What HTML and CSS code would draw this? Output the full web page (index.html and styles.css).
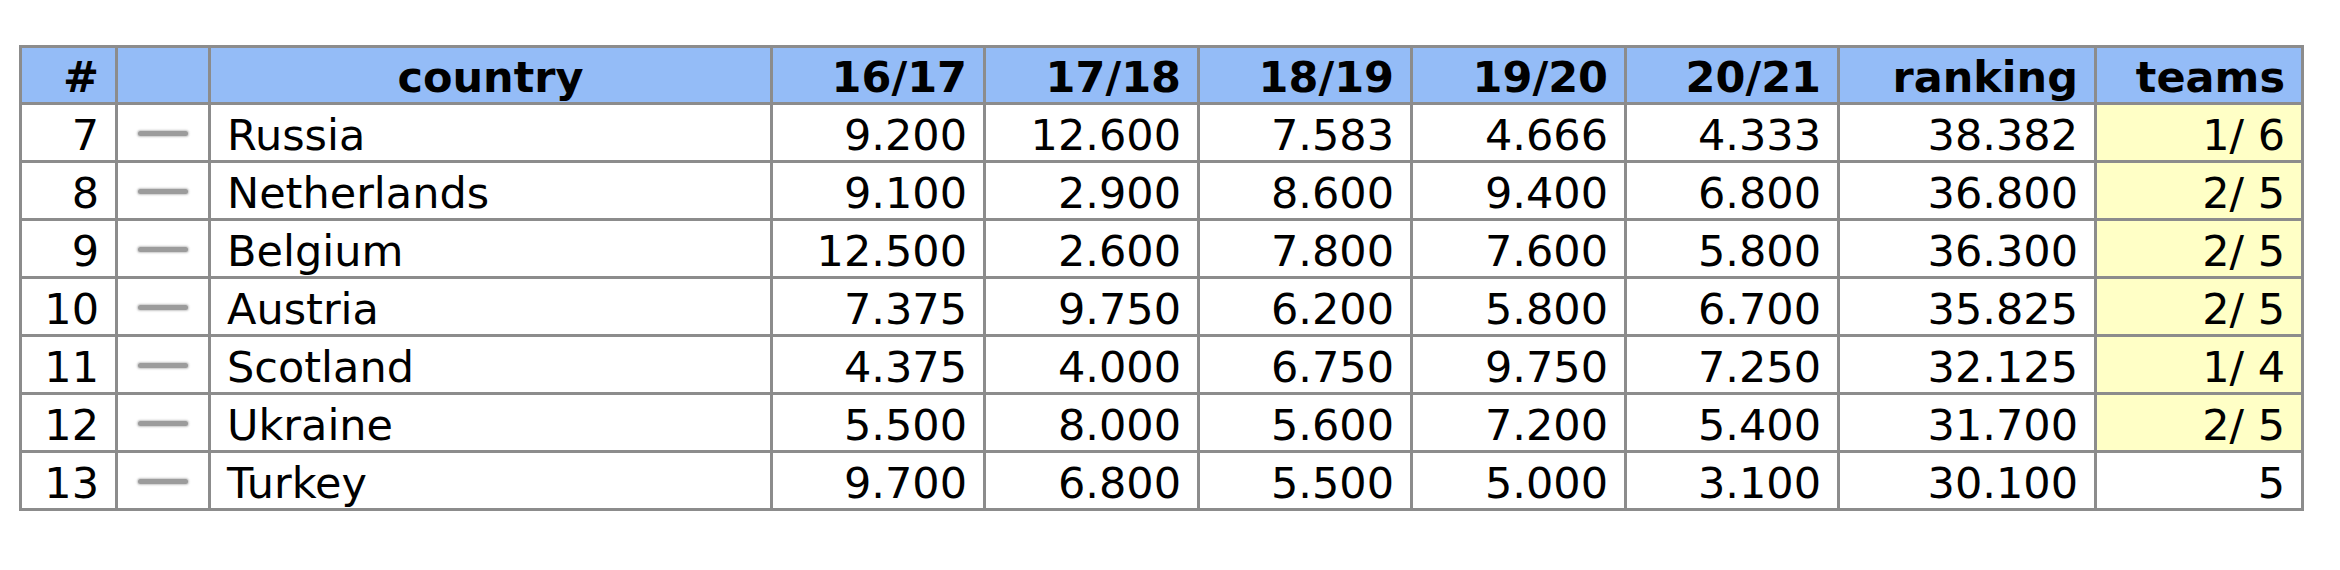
FILE: index.html
```html
<!DOCTYPE html>
<html>
<head>
<meta charset="utf-8">
<link rel="stylesheet" href="styles.css">
</head>
<body>
<div class="wrap">
<table class="rank">
<colgroup>
<col class="c-num"><col class="c-icon"><col class="c-country">
<col class="c-y1"><col class="c-y2"><col class="c-y3"><col class="c-y4"><col class="c-y5">
<col class="c-rank"><col class="c-teams">
</colgroup>
<thead>
<tr>
<th class="r">#</th><th></th><th class="c">country</th>
<th class="r">16/17</th><th class="r">17/18</th><th class="r">18/19</th><th class="r">19/20</th><th class="r">20/21</th>
<th class="r">ranking</th><th class="r">teams</th>
</tr>
</thead>
<tbody>
<tr><td class="r">7</td><td class="ic"><span class="dash"></span></td><td>Russia</td><td class="r">9.200</td><td class="r">12.600</td><td class="r">7.583</td><td class="r">4.666</td><td class="r">4.333</td><td class="r">38.382</td><td class="r hl">1/ 6</td></tr>
<tr><td class="r">8</td><td class="ic"><span class="dash"></span></td><td>Netherlands</td><td class="r">9.100</td><td class="r">2.900</td><td class="r">8.600</td><td class="r">9.400</td><td class="r">6.800</td><td class="r">36.800</td><td class="r hl">2/ 5</td></tr>
<tr><td class="r">9</td><td class="ic"><span class="dash"></span></td><td>Belgium</td><td class="r">12.500</td><td class="r">2.600</td><td class="r">7.800</td><td class="r">7.600</td><td class="r">5.800</td><td class="r">36.300</td><td class="r hl">2/ 5</td></tr>
<tr><td class="r">10</td><td class="ic"><span class="dash"></span></td><td>Austria</td><td class="r">7.375</td><td class="r">9.750</td><td class="r">6.200</td><td class="r">5.800</td><td class="r">6.700</td><td class="r">35.825</td><td class="r hl">2/ 5</td></tr>
<tr><td class="r">11</td><td class="ic"><span class="dash"></span></td><td>Scotland</td><td class="r">4.375</td><td class="r">4.000</td><td class="r">6.750</td><td class="r">9.750</td><td class="r">7.250</td><td class="r">32.125</td><td class="r hl">1/ 4</td></tr>
<tr><td class="r">12</td><td class="ic"><span class="dash"></span></td><td>Ukraine</td><td class="r">5.500</td><td class="r">8.000</td><td class="r">5.600</td><td class="r">7.200</td><td class="r">5.400</td><td class="r">31.700</td><td class="r hl">2/ 5</td></tr>
<tr><td class="r">13</td><td class="ic"><span class="dash"></span></td><td>Turkey</td><td class="r">9.700</td><td class="r">6.800</td><td class="r">5.500</td><td class="r">5.000</td><td class="r">3.100</td><td class="r">30.100</td><td class="r">5</td></tr>
</tbody>
</table>
</div>
</body>
</html>
```

FILE: styles.css
```css
html, body {
  margin: 0;
  padding: 0;
  background: #ffffff;
}

.wrap {
  padding: 45px 0 0 19px;
}

.rank {
  border-collapse: collapse;
  table-layout: fixed;
  width: 2285px;
  font-family: "DejaVu Sans", Verdana, sans-serif;
  font-size: 43px;
  line-height: 49px;
  color: #000;
}

.c-num { width: 96px; }
.c-icon { width: 93px; }
.c-country { width: 562px; }
.c-y1 { width: 213px; }
.c-y2 { width: 214px; }
.c-y3 { width: 213px; }
.c-y4 { width: 214px; }
.c-y5 { width: 213px; }
.c-rank { width: 257px; }
.c-teams { width: 207px; }

.rank th,
.rank td {
  border: 3px solid #8c8c8c;
  padding: 6px 16px 0 16px;
  vertical-align: top;
  white-space: nowrap;
  overflow: hidden;
}

.rank th {
  background: #94bcf7;
  font-weight: bold;
  padding-top: 5px;
  height: 49px;
}

.rank td {
  height: 49px;
}

.r { text-align: right; }
.c { text-align: center; }
.rank td:nth-child(3) { text-align: left; }

.hl { background: #ffffc6; }

.ic {
  text-align: center;
}

.dash {
  display: inline-block;
  width: 50px;
  height: 5px;
  margin-top: 20px;
  background: #9c9c9c;
  border-radius: 3px;
  box-shadow: 0 0 2px 1px rgba(160, 160, 160, 0.6);
  vertical-align: top;
}
```
